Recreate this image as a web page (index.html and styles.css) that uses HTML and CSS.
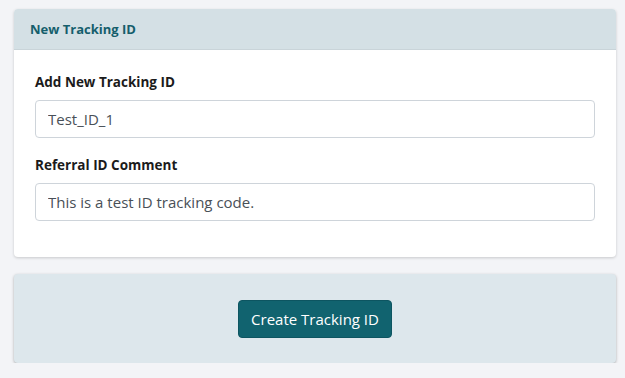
FILE: index.html
```html
<!DOCTYPE html>
<html lang="en">
<head>
    <meta charset="UTF-8">
    <meta name="viewport" content="width=device-width, initial-scale=1.0">
    <title>New Tracking ID</title>
    <link rel="stylesheet" href="styles.css">
</head>
<body>
    <div class="page">
        <div class="card">
            <div class="card-header">New Tracking ID</div>
            <div class="card-body">
                <div class="field">
                    <label for="tracking-id">Add New Tracking ID</label>
                    <input type="text" id="tracking-id" value="Test_ID_1">
                </div>
                <div class="field">
                    <label for="referral-comment">Referral ID Comment</label>
                    <input type="text" id="referral-comment" value="This is a test ID tracking code.">
                </div>
            </div>
        </div>

        <div class="actions">
            <button type="button" class="btn-primary">Create Tracking ID</button>
        </div>
    </div>
</body>
</html>
```

FILE: styles.css
```css
* {
    margin: 0;
    padding: 0;
    box-sizing: border-box;
    font-family: "Open Sans", "Noto Sans", sans-serif;
}

body {
    background: #f3f4f7;
    color: #212529;
}

.page {
    padding: 9px 9px 0 14px;
    display: flex;
    flex-direction: column;
    gap: 17px;
}

.card {
    background: #fff;
    border-radius: 4px;
    box-shadow: 0 1px 3px rgba(0, 0, 0, 0.18);
}

.card-header {
    background: #d4e0e5;
    color: #155e6c;
    font-size: 13px;
    font-weight: 700;
    height: 41px;
    line-height: 41px;
    padding: 0 16px;
    border-radius: 4px 4px 0 0;
    border-bottom: 1px solid #c9d4d9;
}

.card-body {
    padding: 22px 21px 19px 21px;
}

.field {
    display: flex;
    flex-direction: column;
    margin-bottom: 17px;
}

.field label {
    font-size: 13.5px;
    font-weight: 700;
    color: #1b1b1b;
    margin-bottom: 8px;
    line-height: 20px;
}

.field input {
    height: 38px;
    padding: 0 12px;
    border: 1px solid #ced4da;
    border-radius: 4px;
    font-size: 15px;
    color: #495057;
    outline: none;
    background: #fff;
}

.actions {
    background: #dde7ec;
    border-radius: 4px;
    box-shadow: 0 1px 3px rgba(0, 0, 0, 0.3);
    height: 89px;
    display: flex;
    justify-content: center;
    align-items: center;
}

.btn-primary {
    background: #11636f;
    color: #fff;
    border: 1px solid #0d5561;
    border-radius: 4px;
    height: 38px;
    padding: 0 12px;
    font-size: 15px;
    cursor: pointer;
}
```
